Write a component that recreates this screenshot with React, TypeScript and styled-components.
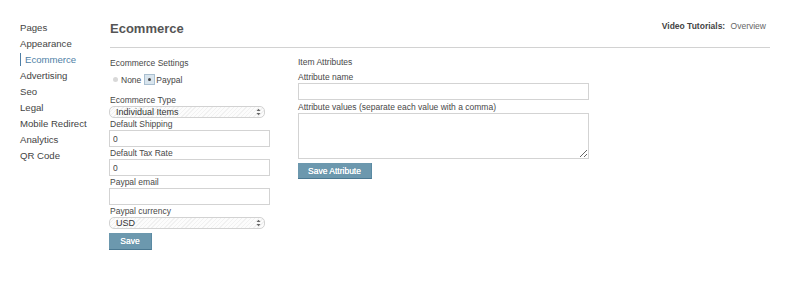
import React from 'react';
import styled, { createGlobalStyle, css } from 'styled-components';

const GlobalStyle = createGlobalStyle`
  html, body { margin: 0; padding: 0; background: #fff; }
  body { font-family: "Liberation Sans", Arial, Helvetica, sans-serif; color: #444; }
  * { box-sizing: border-box; }
`;

const Page = styled.div`
  display: flex;
  width: 800px;
  height: 301px;
  padding: 19px 30px 0 20px;
`;

const Nav = styled.nav`
  width: 90px;
  flex: none;
  display: flex;
  flex-direction: column;
`;

const NavItem = styled.a<{ $active?: boolean }>`
  display: flex;
  align-items: center;
  height: 16px;
  font-size: 9.6px;
  color: #444;
  text-decoration: none;
  white-space: nowrap;
  ${(p) =>
    p.$active &&
    css`
      color: #4f7fa6;
      &::before {
        content: '';
        width: 1px;
        height: 13px;
        background: #4f7fa6;
        margin-right: 4px;
      }
    `}
`;

const Main = styled.main`
  flex: 1;
  display: flex;
  flex-direction: column;
`;

const Header = styled.header`
  display: flex;
  justify-content: space-between;
  align-items: flex-start;
  height: 29px;
  border-bottom: 1px solid #d2d2d2;
`;

const Title = styled.h1`
  margin: 0;
  font-size: 13px;
  line-height: 20px;
  font-weight: bold;
  color: #555;
`;

const Tutorials = styled.div`
  font-size: 8.5px;
  line-height: 15px;
  padding-right: 4px;
  color: #666;
  b { color: #444; margin-right: 3px; }
`;

const Columns = styled.div`
  display: flex;
  padding-top: 8px;
`;

const Column = styled.section<{ $width: number; $offset?: number }>`
  width: ${(p) => p.$width}px;
  margin-left: ${(p) => p.$offset ?? 0}px;
  display: flex;
  flex-direction: column;
  align-items: flex-start;
`;

const Label = styled.label<{ $mt?: number }>`
  display: block;
  font-size: 8.5px;
  line-height: 11px;
  padding-top: 1px;
  color: #484848;
  margin-top: ${(p) => p.$mt ?? 0}px;
  white-space: nowrap;
`;

const RadioRow = styled.div`
  display: flex;
  align-items: center;
  height: 15px;
  margin-top: 3px;
  font-size: 8.5px;
  color: #444;
`;

const RadioDot = styled.span`
  width: 5px;
  height: 5px;
  border-radius: 50%;
  background: #d8d8d8;
  margin: 0 3px 0 3px;
`;

const RadioChecked = styled.span`
  width: 11px;
  height: 11px;
  margin: 0 1px 0 3px;
  border: 1px solid #a9bfd0;
  background: #d9e5ee;
  display: flex;
  align-items: center;
  justify-content: center;
  &::after {
    content: '';
    width: 3px;
    height: 3px;
    border-radius: 50%;
    background: #444;
  }
`;

const TextInput = styled.input<{ $width: number; $shift?: boolean }>`
  display: block;
  width: ${(p) => p.$width}px;
  height: 17px;
  margin: 0 0 0 ${(p) => (p.$shift ? -1 : 0)}px;
  padding: 0 3px;
  border: 1px solid #d3d3d3;
  border-radius: 0;
  font-family: inherit;
  font-size: 8.5px;
  color: #444;
  outline: none;
`;

const TextArea = styled.textarea`
  display: block;
  width: 291px;
  height: 46px;
  margin: 0;
  padding: 2px 3px;
  border: 1px solid #d3d3d3;
  border-radius: 0;
  font-family: inherit;
  font-size: 8.5px;
  outline: none;
`;

const SelectWrap = styled.div`
  position: relative;
  width: 156px;
  height: 12px;
  margin-left: -1px;
`;

const Select = styled.select`
  appearance: none;
  -webkit-appearance: none;
  display: block;
  width: 100%;
  height: 12px;
  margin: 0;
  padding: 0 12px 0 6px;
  border: 1px solid #d2d2d2;
  border-radius: 5px;
  font-family: inherit;
  font-size: 9px;
  line-height: 10px;
  color: #333;
  background: repeating-linear-gradient(135deg, #f1f1f1 0 1px, #fcfcfc 1px 3px);
  outline: none;
`;

const SelectArrow = styled.svg`
  position: absolute;
  right: 4px;
  top: 2px;
  width: 5px;
  height: 8px;
  pointer-events: none;
`;

const Button = styled.button<{ $width: number; $height: number; $mt: number; $shift?: boolean }>`
  display: block;
  width: ${(p) => p.$width}px;
  height: ${(p) => p.$height}px;
  margin: ${(p) => p.$mt}px 0 0 ${(p) => (p.$shift ? -1 : 0)}px;
  padding: 0;
  border: none;
  border-bottom: 1px solid #4b7891;
  border-right: 1px solid #5a8aa3;
  background: #6c98ae;
  color: #fff;
  font-family: inherit;
  font-size: 8.5px;
  font-weight: normal;
  text-shadow: 0 0 0.4px #fff;
`;

const Arrow = () => (
  <SelectArrow viewBox="0 0 5 8">
    <path d="M0.5 3 L2.5 0.8 L4.5 3 Z" fill="#666" />
    <path d="M0.5 5 L2.5 7.2 L4.5 5 Z" fill="#666" />
  </SelectArrow>
);

const navItems = [
  'Pages',
  'Appearance',
  'Ecommerce',
  'Advertising',
  'Seo',
  'Legal',
  'Mobile Redirect',
  'Analytics',
  'QR Code',
];

export default function App() {
  return (
    <>
      <GlobalStyle />
      <Page>
        <Nav>
          {navItems.map((n) => (
            <NavItem key={n} $active={n === 'Ecommerce'}>
              {n}
            </NavItem>
          ))}
        </Nav>
        <Main>
          <Header>
            <Title>Ecommerce</Title>
            <Tutorials>
              <b>Video Tutorials:</b> Overview
            </Tutorials>
          </Header>
          <Columns>
            <Column $width={161}>
              <Label $mt={1}>Ecommerce Settings</Label>
              <RadioRow>
                <RadioDot />
                None
                <RadioChecked />
                Paypal
              </RadioRow>
              <Label $mt={7}>Ecommerce Type</Label>
              <SelectWrap>
                <Select defaultValue="Individual Items">
                  <option>Individual Items</option>
                </Select>
                <Arrow />
              </SelectWrap>
              <Label>Default Shipping</Label>
              <TextInput $width={161} $shift defaultValue="0" />
              <Label>Default Tax Rate</Label>
              <TextInput $width={161} $shift defaultValue="0" />
              <Label>Paypal email</Label>
              <TextInput $width={161} $shift defaultValue="" />
              <Label>Paypal currency</Label>
              <SelectWrap>
                <Select defaultValue="USD">
                  <option>USD</option>
                </Select>
                <Arrow />
              </SelectWrap>
              <Button $width={43} $height={17} $mt={4} $shift>
                Save
              </Button>
            </Column>
            <Column $width={291} $offset={27}>
              <Label>Item Attributes</Label>
              <Label $mt={3}>Attribute name</Label>
              <TextInput $width={291} defaultValue="" />
              <Label $mt={1}>Attribute values (separate each value with a comma)</Label>
              <TextArea />
              <Button $width={74} $height={16} $mt={4}>
                Save Attribute
              </Button>
            </Column>
          </Columns>
        </Main>
      </Page>
    </>
  );
}
